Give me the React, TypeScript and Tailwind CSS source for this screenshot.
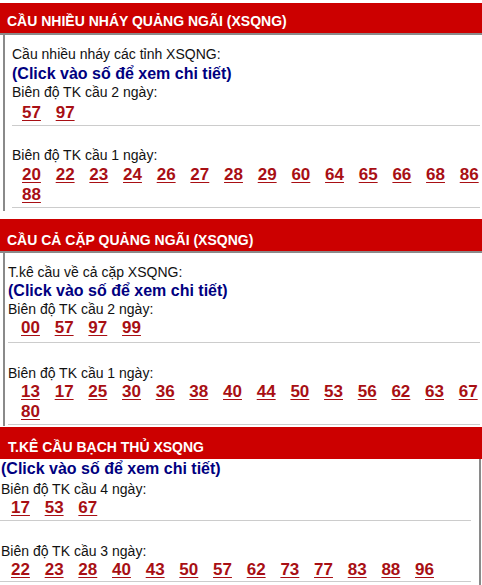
import React from "react";

const numCls =
  "text-[#a80f14] font-bold text-[17px] leading-[20px] underline underline-offset-2 cursor-pointer";

function Nums({ items, className }: { items: string[]; className: string }) {
  return (
    <div className={"flex flex-wrap gap-x-[14.75px] " + className}>
      {items.map((n, i) => (
        <a key={i} className={numCls}>
          {n}
        </a>
      ))}
    </div>
  );
}

export default function App() {
  return (
    <div
      className="w-[482px] h-[585px] overflow-hidden bg-white text-[#111] text-[14px]"
      style={{ fontFamily: '"Liberation Sans", Arial, sans-serif' }}
    >
      {/* Panel 1 */}
      <div className="pt-[3px]">
        <div className="h-[32px] bg-[#cc0000] border-b-2 border-[#8a8a8a] pl-[7px] pt-[8px] text-white font-bold text-[14px] leading-[20px] whitespace-nowrap">
          CẦU NHIỀU NHÁY QUẢNG NGÃI (XSQNG)
        </div>
        <div className="ml-[3px] border-l-2 border-[#8a8a8a] pl-[7px] pr-[2px] pt-[9px] pb-[3px]">
          <div className="leading-[20px]">Cầu nhiều nháy các tỉnh XSQNG:</div>
          <div className="leading-[18px] text-[16px] font-bold text-[#000080] mt-px">
            (Click vào số để xem chi tiết)
          </div>
          <div className="leading-[18px]">Biên độ TK cầu 2 ngày:</div>
          <Nums items={["57", "97"]} className="pl-[10px] mt-[2px]" />
          <div className="h-px bg-[#cccccc] mt-[2px]" />
          <div className="leading-[18px] mt-[20px]">Biên độ TK cầu 1 ngày:</div>
          <Nums
            items={["20", "22", "23", "24", "26", "27", "28", "29", "60", "64", "65", "66", "68", "86", "88"]}
            className="pl-[10px] mt-px"
          />
          <div className="h-px bg-[#cccccc] mt-[2px]" />
        </div>
      </div>

      {/* Panel 2 */}
      <div className="mt-[8px]">
        <div className="h-[34px] bg-[#cc0000] border-b-2 border-[#8a8a8a] pl-[7px] pt-[11px] text-white font-bold text-[14px] leading-[20px] whitespace-nowrap">
          CẦU CẢ CẶP QUẢNG NGÃI (XSQNG)
        </div>
        <div className="ml-[3px] border-l-2 border-[#8a8a8a] pl-[3px] pr-[2px] pt-[10px] pb-px">
          <div className="leading-[18px]">T.kê cầu về cả cặp XSQNG:</div>
          <div className="leading-[18px] text-[16px] font-bold text-[#000080] mt-px">
            (Click vào số để xem chi tiết)
          </div>
          <div className="leading-[18px]">Biên độ TK cầu 2 ngày:</div>
          <Nums items={["00", "57", "97", "99"]} className="pl-[13px]" />
          <div className="h-px bg-[#cccccc] mt-[4px]" />
          <div className="leading-[18px] mt-[21px]">Biên độ TK cầu 1 ngày:</div>
          <Nums
            items={["13", "17", "25", "30", "36", "38", "40", "44", "50", "53", "56", "62", "63", "67", "80"]}
            className="pl-[13px]"
          />
          <div className="h-px bg-[#cccccc] mt-[2px]" />
        </div>
      </div>

      {/* Panel 3 */}
      <div className="mt-px">
        <div className="h-[32px] bg-[#cc0000] pl-[8px] pt-[10px] text-white font-bold text-[14px] leading-[20px] whitespace-nowrap">
          T.KÊ CẦU BẠCH THỦ XSQNG
        </div>
        <div className="mr-px border-r-2 border-[#8a8a8a] pl-px">
          <div className="leading-[20px] text-[16px] font-bold text-[#000080]">
            (Click vào số để xem chi tiết)
          </div>
          <div className="leading-[18px] mt-px">Biên độ TK cầu 4 ngày:</div>
          <Nums items={["17", "53", "67"]} className="pl-[10px]" />
          <div className="h-px bg-[#cccccc] mt-[2px] -ml-px mr-[8px]" />
          <div className="leading-[18px] mt-[21px]">Biên độ TK cầu 3 ngày:</div>
          <Nums
            items={["22", "23", "28", "40", "43", "50", "57", "62", "73", "77", "83", "88", "96"]}
            className="pl-[10px]"
          />
          <div className="h-px bg-[#cccccc] mt-px -ml-px mr-[8px]" />
          <div className="h-[20px]" />
        </div>
      </div>
    </div>
  );
}
